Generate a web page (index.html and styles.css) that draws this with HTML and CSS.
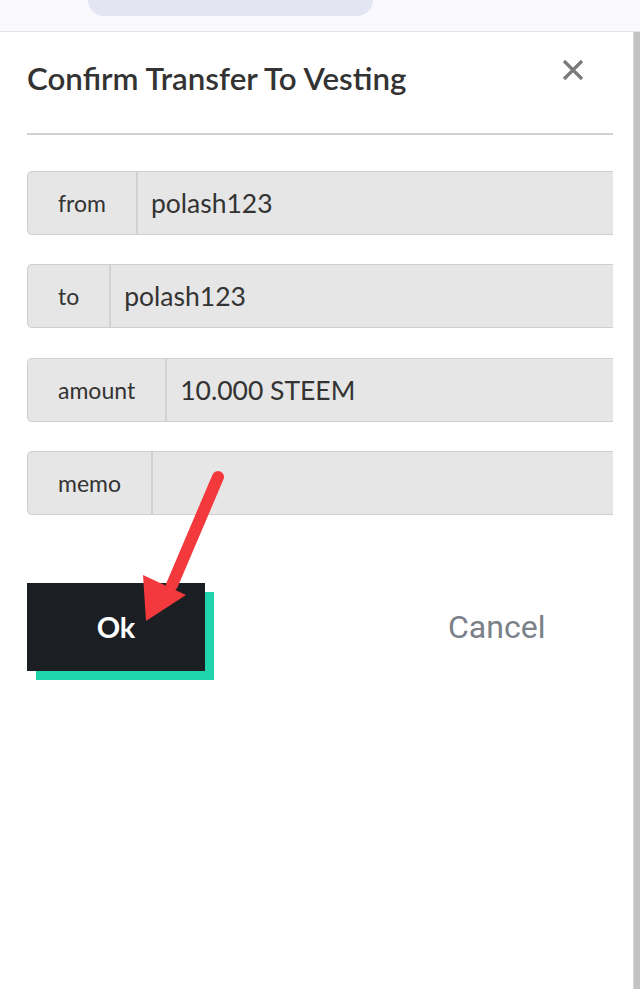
FILE: index.html
```html
<!DOCTYPE html>
<html>
<head>
<meta charset="utf-8">
<link rel="stylesheet" href="styles.css">
</head>
<body>
<div class="topbar"><div class="pill"></div></div>
<div class="page">
  <div class="modal">
    <div class="header">
      <h1 class="title">Confirm Transfer To Vesting</h1>
      <button class="close" aria-label="close">
        <svg viewBox="0 0 22 22" width="22" height="22"><path d="M2 2 L20 20 M20 2 L2 20" stroke="#7a7a7a" stroke-width="3.2" stroke-linecap="butt"/></svg>
      </button>
    </div>
    <hr class="rule">
    <div class="fields">
      <div class="group"><span class="label">from</span><span class="value">polash123</span></div>
      <div class="group"><span class="label">to</span><span class="value">polash123</span></div>
      <div class="group"><span class="label">amount</span><span class="value">10.000 STEEM</span></div>
      <div class="group"><span class="label">memo</span><span class="value"></span></div>
    </div>
    <div class="actions">
      <button class="ok">Ok</button>
      <button class="cancel">Cancel</button>
    </div>
    <svg class="arrow" viewBox="0 0 100 170" width="100" height="170">
      <path d="M93 14 L47 122" stroke="#f4393d" stroke-width="12" stroke-linecap="round"/>
      <polygon points="18,112 61,132 21,158" fill="#f4393d"/>
    </svg>
  </div>
  <div class="scrollbar"></div>
</div>
</body>
</html>
```
FILE: styles.css
```css
html, body {
  margin: 0;
  padding: 0;
  background: #ffffff;
  font-family: "Lato", "Open Sans", sans-serif;
  color: #333333;
}
.topbar {
  height: 31px;
  background: #f8f8fd;
  border-bottom: 1px solid #e2e2ea;
  overflow: hidden;
}
.pill {
  margin-left: 88px;
  width: 285px;
  height: 16px;
  background: #e4e5f3;
  border-radius: 0 0 24px 24px;
}
.page {
  display: flex;
  min-height: 957px;
}
.modal {
  flex: 1;
  padding: 0 20px 0 27px;
  position: relative;
}
.scrollbar {
  width: 6px;
  background: #c3c3c3;
  border-left: 1px solid #d6d6d6;
}
.header {
  display: flex;
  justify-content: space-between;
  align-items: flex-start;
  padding-top: 27px;
}
.title {
  margin: 0;
  font-size: 31.3px;
  line-height: 38px;
  font-weight: 600;
  color: #333333;
}
.close {
  background: none;
  border: 0;
  padding: 0;
  margin: 0 29px 0 0;
  width: 22px;
  height: 22px;
  display: block;
}
.close svg { display: block; }
.rule {
  margin: 36px 0 0 0;
  border: 0;
  height: 2px;
  background: #d0d0d0;
}
.fields {
  display: flex;
  flex-direction: column;
  gap: 29.3px;
  margin-top: 36px;
}
.group {
  display: flex;
  height: 64px;
  box-sizing: border-box;
  border: 1px solid #cfcfcf;
  border-right: 0;
  border-radius: 5px 0 0 5px;
  background: #e6e6e6;
}
.label {
  display: flex;
  align-items: center;
  padding: 0 30px;
  font-size: 23px;
  color: #333;
  border-right: 2px solid #d2d2d2;
}
.value {
  display: flex;
  align-items: center;
  padding-left: 13px;
  font-size: 26.5px;
  color: #333;
}
.actions {
  display: flex;
  align-items: center;
  margin-top: 68px;
}
.ok {
  width: 178px;
  height: 88px;
  background: #1b1f24;
  color: #ffffff;
  border: 0;
  font-family: "Lato", sans-serif;
  font-weight: 700;
  font-size: 29px;
  box-shadow: 9px 9px 0 #1fd3ac;
  padding: 0;
}
.cancel {
  margin-left: 243px;
  background: none;
  border: 0;
  padding: 0;
  font-family: "Roboto", sans-serif;
  font-size: 32px;
  color: #7a8188;
}
.arrow {
  position: absolute;
  left: 125px;
  top: 431px;
}
```
